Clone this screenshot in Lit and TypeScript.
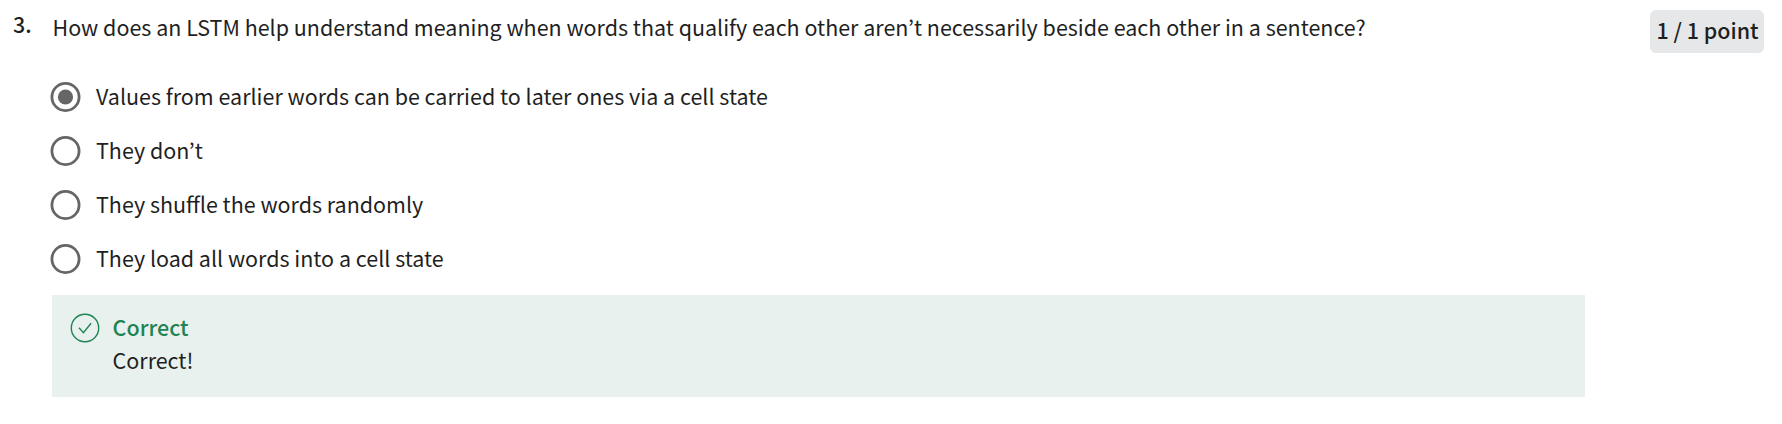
import { LitElement, html, css, svg } from "lit";
import { customElement, property } from "lit/decorators.js";

@customElement("radio-option")
class RadioOption extends LitElement {
  @property() label = "";
  @property({ type: Boolean }) checked = false;

  static styles = css`
    :host { display: flex; align-items: center; height: 54px; gap: 15px; }
    .ring { width: 31px; height: 30px; flex: none; display: block; }
    .label { line-height: 30px; white-space: nowrap; margin-bottom: 2px; }
  `;

  render() {
    return html`
      <svg class="ring" viewBox="0 0 31 30" role="radio" aria-checked=${this.checked}>
        <circle cx="15.5" cy="15" r="13.6" fill="none" stroke="#666" stroke-width="2.8"></circle>
        ${this.checked ? svg`<circle cx="15.5" cy="15" r="7.6" fill="#666"></circle>` : ""}
      </svg>
      <span class="label">${this.label}</span>
    `;
  }
}

@customElement("app-root")
class AppRoot extends LitElement {
  options = [
    { label: "Values from earlier words can be carried to later ones via a cell state", checked: true },
    { label: "They don’t", checked: false },
    { label: "They shuffle the words randomly", checked: false },
    { label: "They load all words into a cell state", checked: false },
  ];

  static styles = css`
    :host {
      display: block;
      box-sizing: border-box;
      height: 424px;
      background: #fff;
      color: #1f1f1f;
      font-family: "Noto Sans CJK KR", "Noto Sans", sans-serif;
      font-size: 21.48px;
      line-height: 30px;
      padding: 10px 18px 0 13px;
    }
    .question { display: flex; align-items: flex-start; height: 60px; }
    .number { width: 39.5px; font-weight: 500; margin-top: -1px; flex: none; }
    .prompt { flex: 1; margin-top: 2px; white-space: nowrap; }
    .points {
      box-sizing: border-box;
      width: 114px;
      height: 43px;
      padding-left: 1px;
      line-height: 40px;
      border-radius: 6px;
      background: #e5e7e8;
      font-weight: 500;
      text-align: center;
      white-space: nowrap;
    }
    .options { padding-left: 37px; }
    .feedback {
      box-sizing: border-box;
      width: 1533px;
      height: 102px;
      margin: 9px 0 0 39px;
      padding: 17px 18px;
      display: flex;
      gap: 12.6px;
      background: #e8f1ee;
    }
    .check { width: 30px; height: 30px; margin-top: 1px; flex: none; }
    .verdict { color: #1f8354; font-weight: 500; }
    .detail { margin-top: 3px; }
  `;

  render() {
    return html`
      <div class="question">
        <div class="number">3.</div>
        <div class="prompt">How does an LSTM help understand meaning when words that qualify each other aren’t necessarily beside each other in a sentence?</div>
        <div class="points">1 / 1 point</div>
      </div>
      <div class="options">
        ${this.options.map((o) => html`<radio-option .label=${o.label} .checked=${o.checked}></radio-option>`)}
      </div>
      <div class="feedback">
        <svg class="check" viewBox="0 0 30 30" fill="none" stroke="#1f8354" stroke-width="1.4">
          <circle cx="15" cy="15" r="13.7"></circle>
          <path d="M9 14.8L13.4 19.6L21.1 10.2"></path>
        </svg>
        <div>
          <div class="verdict">Correct</div>
          <div class="detail">Correct!</div>
        </div>
      </div>
    `;
  }
}
